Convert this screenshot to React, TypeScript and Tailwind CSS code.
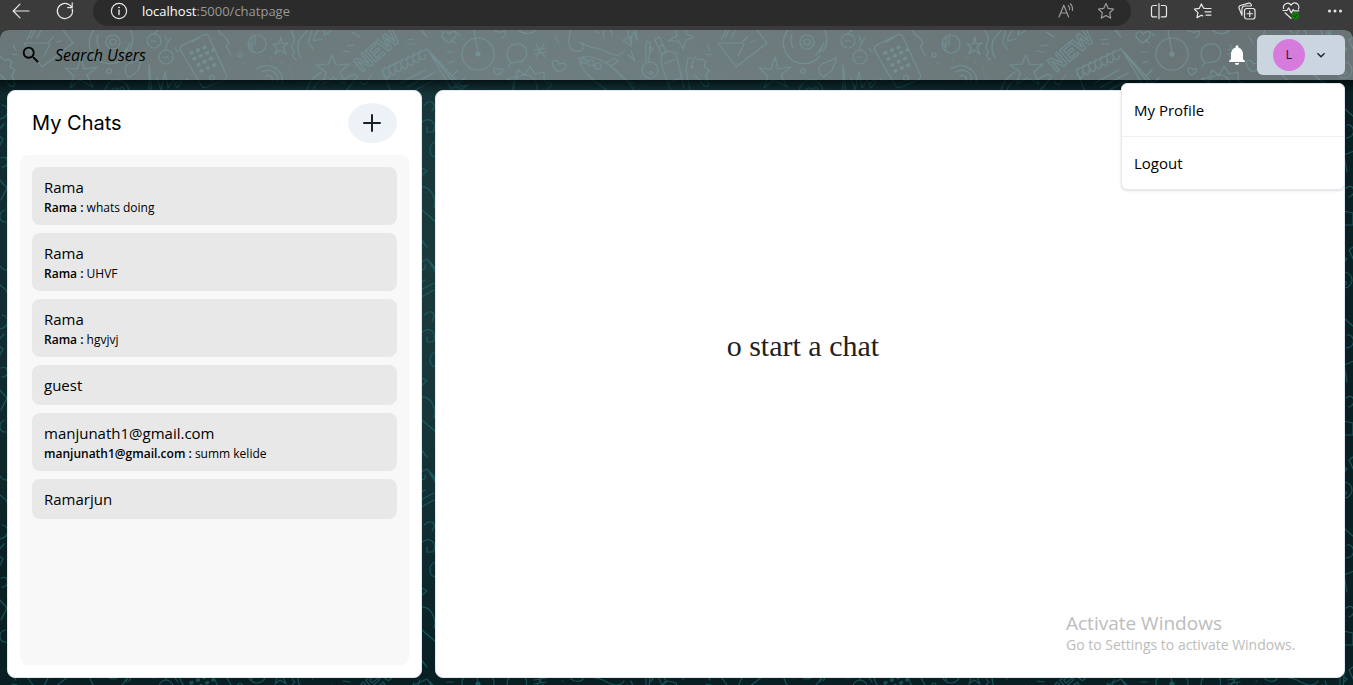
import type { ReactNode } from "react";
import { MdNotifications, MdSearch } from "react-icons/md";

type Chat = { id: number; name: string; sender?: string; message?: string };

const chats: Chat[] = [
  { id: 1, name: "Rama", sender: "Rama", message: "whats doing" },
  { id: 2, name: "Rama", sender: "Rama", message: "UHVF" },
  { id: 3, name: "Rama", sender: "Rama", message: "hgvjvj" },
  { id: 4, name: "guest" },
  { id: 5, name: "manjunath1@gmail.com", sender: "manjunath1@gmail.com", message: "summ kelide" },
  { id: 6, name: "Ramarjun" },
];

function LineIcon({ children, size = 20, className = "" }: { children: ReactNode; size?: number; className?: string }) {
  return (
    <svg
      width={size}
      height={size}
      viewBox={`0 0 ${size} ${size}`}
      fill="none"
      stroke="currentColor"
      strokeWidth="1.2"
      strokeLinecap="round"
      strokeLinejoin="round"
      className={className}
      aria-hidden="true"
    >
      {children}
    </svg>
  );
}

function ToolButton({ label, children }: { label: string; children: ReactNode }) {
  return (
    <button type="button" aria-label={label} className="flex h-5 w-5 items-center justify-center">
      {children}
    </button>
  );
}

function BrowserBar() {
  return (
    <div className="h-[30px] shrink-0 overflow-hidden bg-[#3b3b3b] text-[#e8e8e8]">
      <div className="flex h-[22px] items-center pr-2 pl-[11px]">
        <div className="flex gap-6">
          <ToolButton label="Back">
            <LineIcon>
              <path d="M18 10H2.5M9 3.2 2.2 10 9 16.8" />
            </LineIcon>
          </ToolButton>
          <ToolButton label="Refresh">
            <LineIcon>
              <path d="M17.3 8.2A7.6 7.6 0 1 1 15 4.4L17 6.3M17.2 1.8v4.8h-4.6" />
            </LineIcon>
          </ToolButton>
        </div>
        <div className="ml-[18px] flex h-[30px] flex-1 items-center rounded-full bg-[#2b2b2b] pr-[15px] pl-4">
          <ToolButton label="Site information">
            <LineIcon>
              <circle cx="10" cy="10" r="7.6" />
              <path d="M10 9v4.6" strokeWidth="1.4" />
              <circle cx="10" cy="6.4" r=".5" fill="currentColor" strokeWidth=".8" />
            </LineIcon>
          </ToolButton>
          <p className="ml-[13px] flex-1 text-[13px] leading-5 text-[#9a9a9a]">
            <span className="text-white">localhost</span>:5000/chatpage
          </p>
          <div className="flex gap-5 text-[#9b9b9b]">
            <ToolButton label="Read aloud">
              <LineIcon>
                <path d="M3 16 7.8 4.2 12.6 16M4.7 12h6.2M12.2 4.6a4.6 4.6 0 0 1 1.4 4M14.2 2.8a7.4 7.4 0 0 1 2.2 6.6" />
              </LineIcon>
            </ToolButton>
            <ToolButton label="Add to favorites">
              <LineIcon>
                <path d="m10 2.6 2.3 4.8 5.3.7-3.9 3.7 1 5.3-4.7-2.6-4.7 2.6 1-5.3-3.9-3.7 5.3-.7z" />
              </LineIcon>
            </ToolButton>
          </div>
        </div>
        <div className="ml-[18px] flex gap-6">
          <ToolButton label="Split screen">
            <LineIcon>
              <path d="M7.7 4.5H4.5a2 2 0 0 0-2 2v7.4a2 2 0 0 0 2 2h3.2M12.3 4.5h3.2a2 2 0 0 1 2 2v7.4a2 2 0 0 1-2 2h-3.2M10 2.6v15.2" />
            </LineIcon>
          </ToolButton>
          <ToolButton label="Favorites">
            <LineIcon>
              <path d="m12.4 7.5-1.8-.3-2.2-4.3-2.2 4.5-4.8.7 3.5 3.5-.9 5 4.4-2.4 1.300.7M13 7.5h5M12 10.8h6M13 14.1h5" />
            </LineIcon>
          </ToolButton>
          <ToolButton label="Collections">
            <LineIcon>
              <rect x="7.5" y="7.5" width="10.5" height="10.5" rx="2.2" />
              <path d="M12.75 10v5.5M10 12.75h5.5M5 14.3 2.1 7.2a2 2 0 0 1 1.3-2.7l8.4-2.3a2 2 0 0 1 2.3 1.2l.4 1.2M5 13.5V7.6a2.6 2.6 0 0 1 2.600-2.600h6" />
            </LineIcon>
          </ToolButton>
          <ToolButton label="Browser essentials">
            <LineIcon>
              <path d="M2.6 7.5a4.100 4.100 0 0 1 7.400-3.300 4.100 4.100 0 0 1 7.400 3.800M2 9.500h4l1.600-2.600 2.800 5 1.800-3.400 1 1.300h4.600M4 11.800l6 5.500" />
              <circle cx="14.4" cy="14.7" r="3.7" fill="#107c10" stroke="none" />
              <path d="m12.9 14.8 1.1 1.1 2-2.2" stroke="#0a4d0a" />
            </LineIcon>
          </ToolButton>
          <ToolButton label="Settings and more">
            <LineIcon>
              <g fill="currentColor" stroke="none">
                <circle cx="4.5" cy="10" r="1.5" />
                <circle cx="10" cy="10" r="1.5" />
                <circle cx="15.5" cy="10" r="1.5" />
              </g>
            </LineIcon>
          </ToolButton>
        </div>
      </div>
    </div>
  );
}

/* Hand-drawn stationery wallpaper, tiled behind the whole page. */
function Wallpaper() {
  return (
    <svg className="absolute inset-0 h-full w-full" aria-hidden="true">
      <defs>
        <radialGradient id="glow" cx="40%" cy="36%" r="62%">
          <stop offset="0" stopColor="#1b3b3c" />
          <stop offset=".4" stopColor="#17363a" />
          <stop offset="1" stopColor="#082024" />
        </radialGradient>
        <linearGradient id="shade" x1="0" y1="0" x2="0" y2="1">
          <stop offset="0" stopColor="#000a0c" stopOpacity=".75" />
          <stop offset="1" stopColor="#000a0c" stopOpacity="0" />
        </linearGradient>
        <pattern id="doodles" width="694" height="210" patternUnits="userSpaceOnUse">
          <g fill="none" stroke="#1f6a72" strokeOpacity=".65" strokeWidth="1.2" strokeLinecap="round" strokeLinejoin="round">
            {/* envelope */}
            <path d="m39 13 18 24 31-24L75-4M39 13h24l5-6M42 10l6-12M46 8l6-12M52 8l6-11M65 14l-6 12M72 12l4-1M28 15l3 5M27 24l5 1" transform="translate(-15 0)" />
            {/* deer */}
            <path d="M0 26c3 4 6 5 8 3l4 3-2 5 5 3-3 6 2 6c2 4-2 6-5 3l-4-6-5-4" />
            {/* disc */}
            <circle cx="113" cy="12" r="7" />
            <circle cx="113" cy="12" r="3" />
            <path d="M94 0a20 20 0 0 0 32 26M130-1a20 20 0 0 1-1 22M98 5a16 16 0 0 0 1 13M126 22l4-9M122 25l6-8" />
            {/* star */}
            <path d="m81 27 3 12 13-2-10 8 6 12-13-7-10 8 4-12-9-8 12 1z" />
            <circle cx="109" cy="41" r="2.5" />
            <path d="M125 38c0-6 14-6 17-11 1 7-5 9-3 12-4 6-8 5-9 8-4-1-5-5-5-9z" />
            <circle cx="117" cy="62" r="12" />
            <circle cx="115" cy="61" r="3" />
            <circle cx="122" cy="59" r="2" />
            {/* berries */}
            <circle cx="154" cy="11" r="7" />
            <circle cx="166" cy="27" r="7" />
            <path d="M151 11h5M163 27h5M154 4c4-4 6-5 4-8M166 20c-1-5 3-9 5-12M165 6l2 5M175 18l3 4" />
            <path d="M149 60V34l3 28M157 48l4 12 4-18 3 16 5-8 4 8 5-6M186 49l4 2M176 53l6-3" />
            {/* mobile phone */}
            <path d="m183 15 20-10q4-2 6 2l17 37q2 4-2 6l-17 7q-4 2-6-2l-20-34q-2-4 2-6zM192 12l7-4" />
            <g strokeDasharray="1 6" strokeWidth="3.5">
              <path d="m191 23 19-8M194 29l19-9M198 35l18-9M201 41l18-8" />
            </g>
            <circle cx="212" cy="48" r="2.5" />
            <path d="M218 0c5 9 8 4 11 14l-3 2 5 9" />
            <circle cx="240" cy="25" r="2" />
            {/* ball */}
            <circle cx="257" cy="14" r="9" />
            <path d="M252 7v13M255 6v9M249 12l2 5" />
            <path d="m281 7 1 7 6-1-5 4 3 7-6-4-5 4 2-6-4-4 6 0z" />
            {/* signal */}
            <path d="M257 39c13-10 29 4 25 14M262 42c9-5 18 2 15 10M266 46c4-2 8 2 6 6M243 33h1M258 29h1M271 27h1M281 32h1M289 39h1M292 48h1" />
            {/* octopus */}
            <path d="M291-1c0 5 5 7 3 12-4 6-1 10 1 11-4 2-2 7 2 8M307 0c-3 6-8 7-9 14 0 6 0 10 3 14M311 0c1 6-3 7-2 13 0 4 4 2 4 6M318 0c0 4-6 5-4 11l8-2M325-2l-1 7 7-4" />
            {/* shooting star */}
            <path d="m332 25 4 10 13-1-9 8 5 12-12-6-10 6 3-12-10-7 12-1zM307 60c2-8 6-12 14-18M313 61c1-6 5-10 12-12M344 50c10-9 17-5 11 0l-10 12" />
            <path d="M346-5l12 4M352 2l8 5M347 16l7-1M343 21l7 1M360 51c2 5 7 4 8-1l3-4" />
            {/* notepad */}
            <path d="m382 40 45-21 38 47M384 44l7 18M428 20l27 45M430 22l32 35M384 38c-5 8 7 14 5 5M390 35c-5 8 7 14 5 5M396 32c-5 8 7 14 5 5M402 29c-5 8 7 14 5 5M408 26c-5 8 7 14 5 5M414 23c-5 8 7 14 5 5M420 20c-5 8 7 14 5 5M401 53l24-13M407 57l27-14M412 62l22-12M407 10l7-1M408 14l7 0M421 0l6 7-6-8" />
            <path d="M449 13c-14-8-4-15 0-9 7-7 12 1 0 9z" />
            {/* record */}
            <circle cx="478" cy="24" r="16" />
            <circle cx="478" cy="24" r="2" fill="#1f6a72" fillOpacity=".65" />
            <path d="m474 0 4 23M455 13l-4-3M453 22h-6M454 31l-5 2M458 40l-5 5M460 6l-2-3M465 48l-12 10 15-3-13 9M490-4c5 8 12 7 15 4 2 4-2 8-4 8M518 0c6 5 14 5 20-2" />
            {/* ornament */}
            <path d="M511 33c-8-9-3-20 8-19 11 1 10 19-2 18l-6 1-3 4M536 15l9 12M544 14l-8 13M534 20l12-2M534 24l12-2M555 7l4 6M562 21h1" />
            <path d="M497 45c-7-7-1-9 2-5 4-4 7 1-2 5zM558 42c-13-12 0-15 1-8 8-3 11 4-1 8z" />
            <path d="M513 61l2-9-8-3 9-2 2-7 7 5 5-9 5 8 9-2 0 9 8 3-5 7" />
            <circle cx="525" cy="57" r="12" />
            {/* string of flags */}
            <path d="M571-1c-3 10-4 20 4 22 9 2 10-5 5-9M580 12c13 8 17 5 23 8 9 5 16 8 21 1M623 10l9-4-1 10zM628 25l7 6-4-10M604 8c-4-11 9-11 8-3M595 0l4 3M626-4l4 15 4-10 3 10-1-16" />
            {/* rocket */}
            <path d="M579 28c12-4 24 2 34 10l18 17 4 8M579 28c2 13 13 22 28 32M606 33l8-5 4 3-7 5M626 50l8 4" />
            <circle cx="584" cy="31" r="2.5" />
            <circle cx="591" cy="33" r="3" />
            <circle cx="598" cy="36" r="3" />
            {/* key */}
            <circle cx="650" cy="40" r="8" />
            <circle cx="651" cy="43" r="1.5" />
            <path d="M646 12v20M650 13l-1 19M646 12c2-2 3 0 4 1v4l3 2-3 3" />
            {/* bottle */}
            <path d="m655 10 4-3 7 14-4 4zM662 25l6-4 8 2 8 35M662 25l-1 8 9 26M664 34l12-5M669 52l12-4M659 17l5-2" />
            <path d="m675-4 2 10-9 5 11 0 4 8 3-9 9-3-9-3 1-7M688 28l6 0-3 10 5-3M688 28l-2 12 4 20" />
            {/* lower rows */}
            <path d="M2 75c8 1 8 12-2 14M4 94l-8 9 7 6-4 8M1 128c8-4 9 10 1 9M0 150l7 8-6 12M5 180c-7 2-7 12 1 12" />
            <path d="M424 75c8-7 13-1 8 6M422 92c8-6 16 1 11 10h-6v-5M436 112c-8 1-8 15 0 15M422 138l5 3-5 4M421 157c10-1 16 12 13 21M422 180l14 12" />
            <path d="M651 79l9 8M653 95c8-1 10 12-1 13M660 121l-10 4 3 17M652 158c7-6 12 6 3 9M649 181l10 2v12h-9z" />
            <path d="M20 100h24l6 12M80 84l12 18-22 4M160 78a12 12 0 1 0 8 20M240 90l20 18M300 80v24h16M520 84l26 14M580 92a10 10 0 1 0 20 0" />
          </g>
          <text
            x="362"
            y="43"
            transform="rotate(-40 362 43)"
            fill="none"
            stroke="#1f6a72"
            strokeOpacity=".65"
            strokeWidth="1.2"
            className="font-['Liberation_Sans'] text-[22px] font-bold"
          >
            NEW
          </text>
        </pattern>
      </defs>
      <rect width="100%" height="100%" fill="url(#glow)" />
      <rect width="100%" height="100%" fill="url(#doodles)" />
      <rect y="50" width="100%" height="14" fill="url(#shade)" />
    </svg>
  );
}

function TopBar() {
  return (
    <header className="relative z-10 flex h-[50px] items-center justify-between rounded-t-lg bg-[#c8c8c8]/50 pr-2 pl-5">
      <button type="button" className="flex items-center gap-[13px] text-black">
        <MdSearch size={22} aria-hidden="true" />
        <span className="text-[16px] leading-6 font-medium italic">Search Users</span>
      </button>
      <div className="flex items-center gap-2">
        <button type="button" aria-label="Notifications" className="text-white">
          <MdNotifications size={24} />
        </button>
        <div className="relative">
          <button
            type="button"
            aria-haspopup="menu"
            aria-expanded="true"
            className="flex h-10 items-center gap-2 rounded-md bg-[#cbd5e0] px-4 text-[#1a202c]"
          >
            <span className="flex h-8 w-8 items-center justify-center rounded-full bg-[#d67bdb] text-[13px] font-medium">
              L
            </span>
            <svg width="16" height="16" viewBox="0 0 24 24" fill="currentColor" aria-hidden="true">
              <path d="M16.59 8.59 12 13.17 7.41 8.59 6 10l6 6 6-6z" />
            </svg>
          </button>
          <div
            role="menu"
            className="absolute top-12 right-0 w-56 divide-y divide-[#edf2f7] rounded-md border border-[#e2e8f0] bg-white text-black shadow-sm"
          >
            <button type="button" role="menuitem" className="block w-full px-3 py-[14px] text-left text-[15px] leading-6">
              My Profile
            </button>
            <button type="button" role="menuitem" className="block w-full px-3 py-[14px] text-left text-[15px] leading-6">
              Logout
            </button>
          </div>
        </div>
      </div>
    </header>
  );
}

function ChatList() {
  return (
    <section className="flex w-[31%] flex-col rounded-lg border border-[#e2e8f0] bg-white p-3">
      <div className="flex items-center justify-between px-3 pb-3">
        <h1 className="font-['Inter',sans-serif] text-[20px] leading-[30px]">My Chats</h1>
        <button
          type="button"
          aria-label="New group chat"
          className="flex h-10 w-[49px] items-center justify-center rounded-[50%] bg-[#edf2f7] text-[#1a202c]"
        >
          <svg width="18" height="18" viewBox="0 0 18 18" stroke="currentColor" strokeWidth="2" strokeLinecap="round" aria-hidden="true">
            <path d="M9 1v16M1 9h16" />
          </svg>
        </button>
      </div>
      <ul className="flex flex-1 flex-col gap-2 rounded-lg bg-[#f8f8f8] p-3">
        {chats.map((chat) => (
          <li key={chat.id}>
            <button type="button" className="block w-full rounded-lg bg-[#e8e8e8] px-3 py-2 text-left text-black">
              <span className="block text-[15px] leading-6">{chat.name}</span>
              {chat.message && (
                <span className="block text-[12px] leading-[18px]">
                  <b className="font-semibold">{chat.sender} : </b>
                  {chat.message}
                </span>
              )}
            </button>
          </li>
        ))}
      </ul>
    </section>
  );
}

export default function App() {
  return (
    <div className="flex min-h-screen flex-col bg-[#3b3b3b] font-['Open_Sans','Noto_Sans',sans-serif]">
      <BrowserBar />
      <div className="relative flex flex-1 flex-col overflow-hidden rounded-t-lg">
        <Wallpaper />
        <TopBar />
        <main className="relative flex flex-1 justify-between pt-[10px] pr-2 pb-[7px] pl-[7px]">
          <ChatList />
          <section className="flex w-[68%] items-center rounded-lg border border-[#e2e8f0] bg-white pb-[76px]">
            <p className="ml-[32%] font-['Liberation_Serif',serif] text-[30px] leading-9 whitespace-nowrap text-[#222]">
              o start a chat
            </p>
          </section>
        </main>
        <aside className="absolute right-[51px] bottom-[30px] w-[236px] whitespace-nowrap text-[#bcbcbc]">
          <p className="text-[19px] leading-6">Activate Windows</p>
          <p className="text-[14px] leading-5">Go to Settings to activate Windows.</p>
        </aside>
      </div>
    </div>
  );
}
